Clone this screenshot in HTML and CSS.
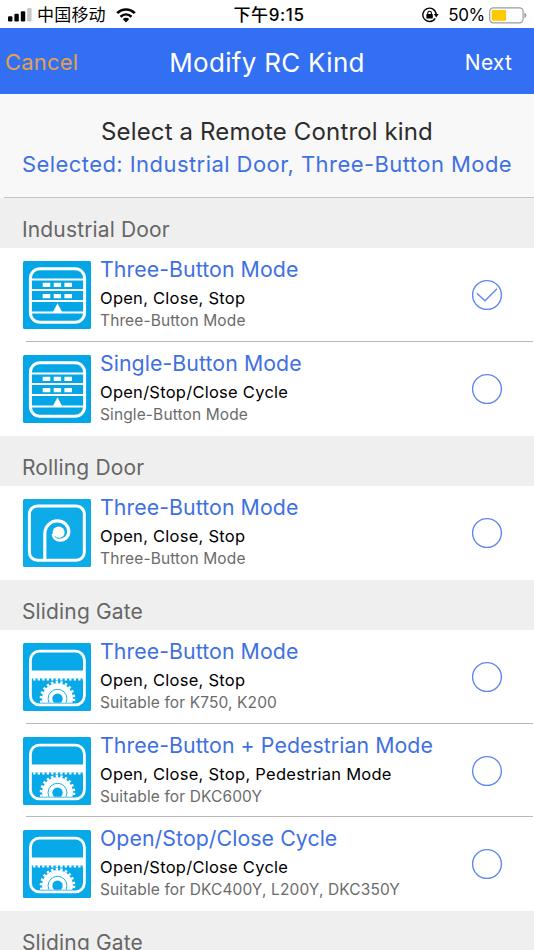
FILE: index.html
```html
<!DOCTYPE html>
<html lang="en">
<head>
<meta charset="utf-8">
<title>Modify RC Kind</title>
<link rel="stylesheet" href="styles.css">
</head>
<body>
<svg class="defs" aria-hidden="true">
  <symbol id="industrial" viewBox="0 0 68 68">
    <rect width="68" height="68" rx="1.5" fill="#05a6e6"/>
    <g fill="none" stroke="#fff">
      <rect x="7.4" y="7.7" width="54.2" height="53.6" rx="9.5" stroke-width="3"/>
      <path d="M7 18.4H62M7 29.1H62M7 40H62M7 51.4H62" stroke-width="2"/>
    </g>
    <path fill="#fff" d="M19.7 21.7h7.6v4.4h-7.6zM30.7 21.7h7.4v4.4h-7.4zM41.4 21.7h7.6v4.4h-7.6zM19.7 32.9h7.6v4.4h-7.6zM30.7 32.9h7.4v4.4h-7.4zM41.4 32.9h7.6v4.4h-7.6zM34.5 42.2l4.6 8.8h-9.2z"/>
  </symbol>
  <symbol id="rolling" viewBox="0 0 68 68">
    <rect width="68" height="68" rx="1.5" fill="#0dabe8"/>
    <g fill="none" stroke="#fff">
      <rect x="6.4" y="7" width="54.9" height="54.2" rx="8" stroke-width="3"/>
      <path d="M21.8 61V35C21.8 27.4 27.6 21.8 34.3 21.8C41.2 21.8 45.8 27 45.8 32.6C45.8 38.2 41.4 41.2 37 41.2C33 41.2 30.4 38.2 30.2 34.8" stroke-width="3.2"/>
    </g>
    <circle cx="35.6" cy="33.4" r="6" fill="#fff"/>
    <path d="M31.8 37.4C33.8 39.6 37 39.9 39.6 38.2" fill="none" stroke="#0dabe8" stroke-width=".9"/>
  </symbol>
  <symbol id="sliding" viewBox="0 0 68 68">
    <clipPath id="frame-clip"><rect x="8" y="8" width="53" height="51.8"/></clipPath>
    <rect width="68" height="68" rx="1.5" fill="#08a9e8"/>
    <rect x="7.4" y="8.2" width="54" height="53.6" rx="9" fill="none" stroke="#fff" stroke-width="2.8"/>
    <path fill="#fff" d="M7 27.4H62V35.6H7z"/>
    <path d="M10.2 36.3H61" stroke="#fff" stroke-width="2.2" stroke-dasharray="2.3 2.2"/>
    <g clip-path="url(#frame-clip)">
      <circle cx="34.5" cy="55.7" r="15.4" fill="#fff"/>
      <circle cx="34.5" cy="55.7" r="16.5" fill="none" stroke="#fff" stroke-width="2.6" stroke-dasharray="2.4 2.313"/>
      <circle cx="34.5" cy="55.7" r="9.4" fill="none" stroke="#08a9e8" stroke-width=".9"/>
      <circle cx="34.5" cy="55.7" r="5.2" fill="#08a9e8"/>
    </g>
  </symbol>
  <symbol id="off" viewBox="0 0 32 32">
    <circle cx="16" cy="16" r="14.4" fill="none" stroke="#6089ee" stroke-width="1.4"/>
  </symbol>
  <symbol id="on" viewBox="0 0 32 32">
    <g fill="none" stroke="#6089ee" stroke-width="1.4">
      <circle cx="16" cy="16" r="14.4"/>
      <path d="M5.8 14.3L14 21.8L26 9.8"/>
    </g>
  </symbol>
</svg>

<div class="status">
  <div class="status-side">
    <svg class="signal" viewBox="0 0 24 14">
      <rect x="0" y="8.3" width="4.4" height="5.2" rx="1.2"/>
      <rect x="6.4" y="5.8" width="4.4" height="7.7" rx="1.2"/>
      <rect x="12.8" y="3.2" width="4.4" height="10.3" rx="1.2"/>
      <rect x="19.2" y="0" width="4.4" height="13.5" rx="1.2" fill="#c7c7c7"/>
    </svg>
    <span class="carrier">中国移动</span>
    <svg class="wifi" viewBox="0 0 20 15">
      <g fill="none" stroke="#000" stroke-width="2.6">
        <path d="M1.2 5.2C6.2.2 13.8.2 18.8 5.2"/>
        <path d="M4.5 8.7C7.8 5.7 12.2 5.7 15.5 8.7"/>
      </g>
      <path d="M6.8 11.1Q10 8.5 13.2 11.1L10 14.5z"/>
    </svg>
  </div>
  <span class="clock">下午9:15</span>
  <div class="status-side right">
    <svg class="lock" viewBox="0 0 17 16">
      <path d="M13.2 11.4A6.7 6.7 0 1 1 14.2 7.2" fill="none" stroke="#000" stroke-width="1.4"/>
      <path d="M11.8 7h4.8l-2.4 3.4z"/>
      <rect x="4.4" y="7" width="6.4" height="4.6" rx=".6"/>
      <path d="M5.8 7.4V6a1.8 1.8 0 0 1 3.6 0v1.4" fill="none" stroke="#000" stroke-width="1.1"/>
    </svg>
    <span class="percent">50%</span>
    <svg class="battery" viewBox="0 0 38 17">
      <rect x=".7" y=".8" width="33.4" height="15" rx="3.6" fill="#fff" stroke="#9c9c9c" stroke-width="1.2"/>
      <rect x="2.7" y="2.9" width="14.4" height="10.8" rx="1" fill="#fdc900"/>
      <path d="M35.4 5.4Q37.4 6.2 37.4 8.3T35.4 11.2z" fill="#9c9c9c"/>
    </svg>
  </div>
</div>

<nav class="nav">
  <span class="cancel">Cancel</span>
  <span class="nav-title">Modify RC Kind</span>
  <span class="next">Next</span>
</nav>

<header class="intro">
  <div class="prompt">Select a Remote Control kind</div>
  <div class="selected">Selected: Industrial Door, Three-Button Mode</div>
</header>

<main>
  <h2 class="group">Industrial Door</h2>
  <div class="row">
    <svg class="icon"><use href="#industrial"/></svg>
    <div class="text"><div class="title">Three-Button Mode</div><div class="actions">Open, Close, Stop</div><div class="note">Three-Button Mode</div></div>
    <svg class="radio"><use href="#on"/></svg>
  </div>
  <div class="row">
    <svg class="icon"><use href="#industrial"/></svg>
    <div class="text"><div class="title">Single-Button Mode</div><div class="actions">Open/Stop/Close Cycle</div><div class="note">Single-Button Mode</div></div>
    <svg class="radio"><use href="#off"/></svg>
  </div>

  <h2 class="group">Rolling Door</h2>
  <div class="row">
    <svg class="icon"><use href="#rolling"/></svg>
    <div class="text"><div class="title">Three-Button Mode</div><div class="actions">Open, Close, Stop</div><div class="note">Three-Button Mode</div></div>
    <svg class="radio"><use href="#off"/></svg>
  </div>

  <h2 class="group">Sliding Gate</h2>
  <div class="row">
    <svg class="icon"><use href="#sliding"/></svg>
    <div class="text"><div class="title">Three-Button Mode</div><div class="actions">Open, Close, Stop</div><div class="note">Suitable for K750, K200</div></div>
    <svg class="radio"><use href="#off"/></svg>
  </div>
  <div class="row">
    <svg class="icon"><use href="#sliding"/></svg>
    <div class="text"><div class="title">Three-Button + Pedestrian Mode</div><div class="actions">Open, Close, Stop, Pedestrian Mode</div><div class="note">Suitable for DKC600Y</div></div>
    <svg class="radio"><use href="#off"/></svg>
  </div>
  <div class="row">
    <svg class="icon"><use href="#sliding"/></svg>
    <div class="text"><div class="title">Open/Stop/Close Cycle</div><div class="actions">Open/Stop/Close Cycle</div><div class="note">Suitable for DKC400Y, L200Y, DKC350Y</div></div>
    <svg class="radio"><use href="#off"/></svg>
  </div>

  <h2 class="group">Sliding Gate</h2>
</main>
</body>
</html>
```
FILE: styles.css
```css
* { box-sizing: border-box; }

body {
  margin: 0;
  height: 950px;
  overflow: hidden;
  background: #fff;
  color: #000;
  font-family: Inter, "Noto Sans CJK SC", sans-serif;
  white-space: nowrap;
}

svg { display: block; flex: none; }
.defs { position: absolute; width: 0; height: 0; }

.status {
  display: grid;
  grid-template-columns: 1fr auto 1fr;
  align-items: center;
  height: 28px;
  padding: 2px 7px 0 8px;
  font-size: 17px;
  line-height: 26px;
}
.status-side { display: flex; align-items: center; }
.right { justify-content: flex-end; }
.signal { width: 24px; height: 14px; }
.carrier { margin-left: 5px; letter-spacing: 0.2px; }
.wifi { width: 20px; height: 15px; margin-left: 10px; }
.clock { font-weight: 500; letter-spacing: 0.6px; margin-left: 3px; }
.lock { width: 17px; height: 16px; }
.percent { margin-left: 9px; letter-spacing: -0.3px; }
.battery { width: 38px; height: 17px; margin-left: 4px; }

.nav {
  display: grid;
  grid-template-columns: 1fr auto 1fr;
  align-items: center;
  height: 66px;
  padding: 2px 22px 0;
  background: #336ff2;
  color: #fff;
}
.cancel { margin-left: -17px; color: #e2a24c; font-size: 22px; letter-spacing: 0.2px; }
.nav-title { font-size: 26px; letter-spacing: 0.3px; }
.next { font-size: 21px; letter-spacing: 0.2px; text-align: right; }

.intro {
  height: 104px;
  padding-top: 22px;
  background: linear-gradient(#c6c6c8, #c6c6c8) 4px 103px / 530px 1px no-repeat #f8f8f8;
  text-align: center;
}
.prompt { font-size: 24px; line-height: 32px; letter-spacing: 0.14px; color: #2c2c2c; }
.selected { font-size: 22px; line-height: 32px; letter-spacing: 0.44px; color: #3f70e2; }

.group {
  margin: 0;
  height: 50px;
  padding: 17px 0 0 22px;
  background: #efefef;
  color: #666;
  font-size: 21px;
  font-weight: 400;
  line-height: 30px;
  letter-spacing: 0.15px;
}

.row {
  display: flex;
  align-items: flex-start;
  height: 93.9px;
  padding: 0 31px 0 23px;
}
.row:has(+ .row) { background: linear-gradient(#b9b9b9, #b9b9b9) 26px 100% / 507px 1px no-repeat; }
.icon { width: 68px; height: 68px; margin-top: 13px; }
.text { flex: 1; margin-left: 9px; padding-top: 7px; }
.title { font-size: 21.3px; line-height: 29px; letter-spacing: 0.07px; color: #3f70e2; }
.actions { font-size: 16.5px; line-height: 29px; letter-spacing: 0.26px; }
.note { font-size: 15.5px; line-height: 15px; letter-spacing: 0.12px; color: #6b6b6b; }
.radio { width: 32px; height: 32px; margin-top: 31px; }
```
